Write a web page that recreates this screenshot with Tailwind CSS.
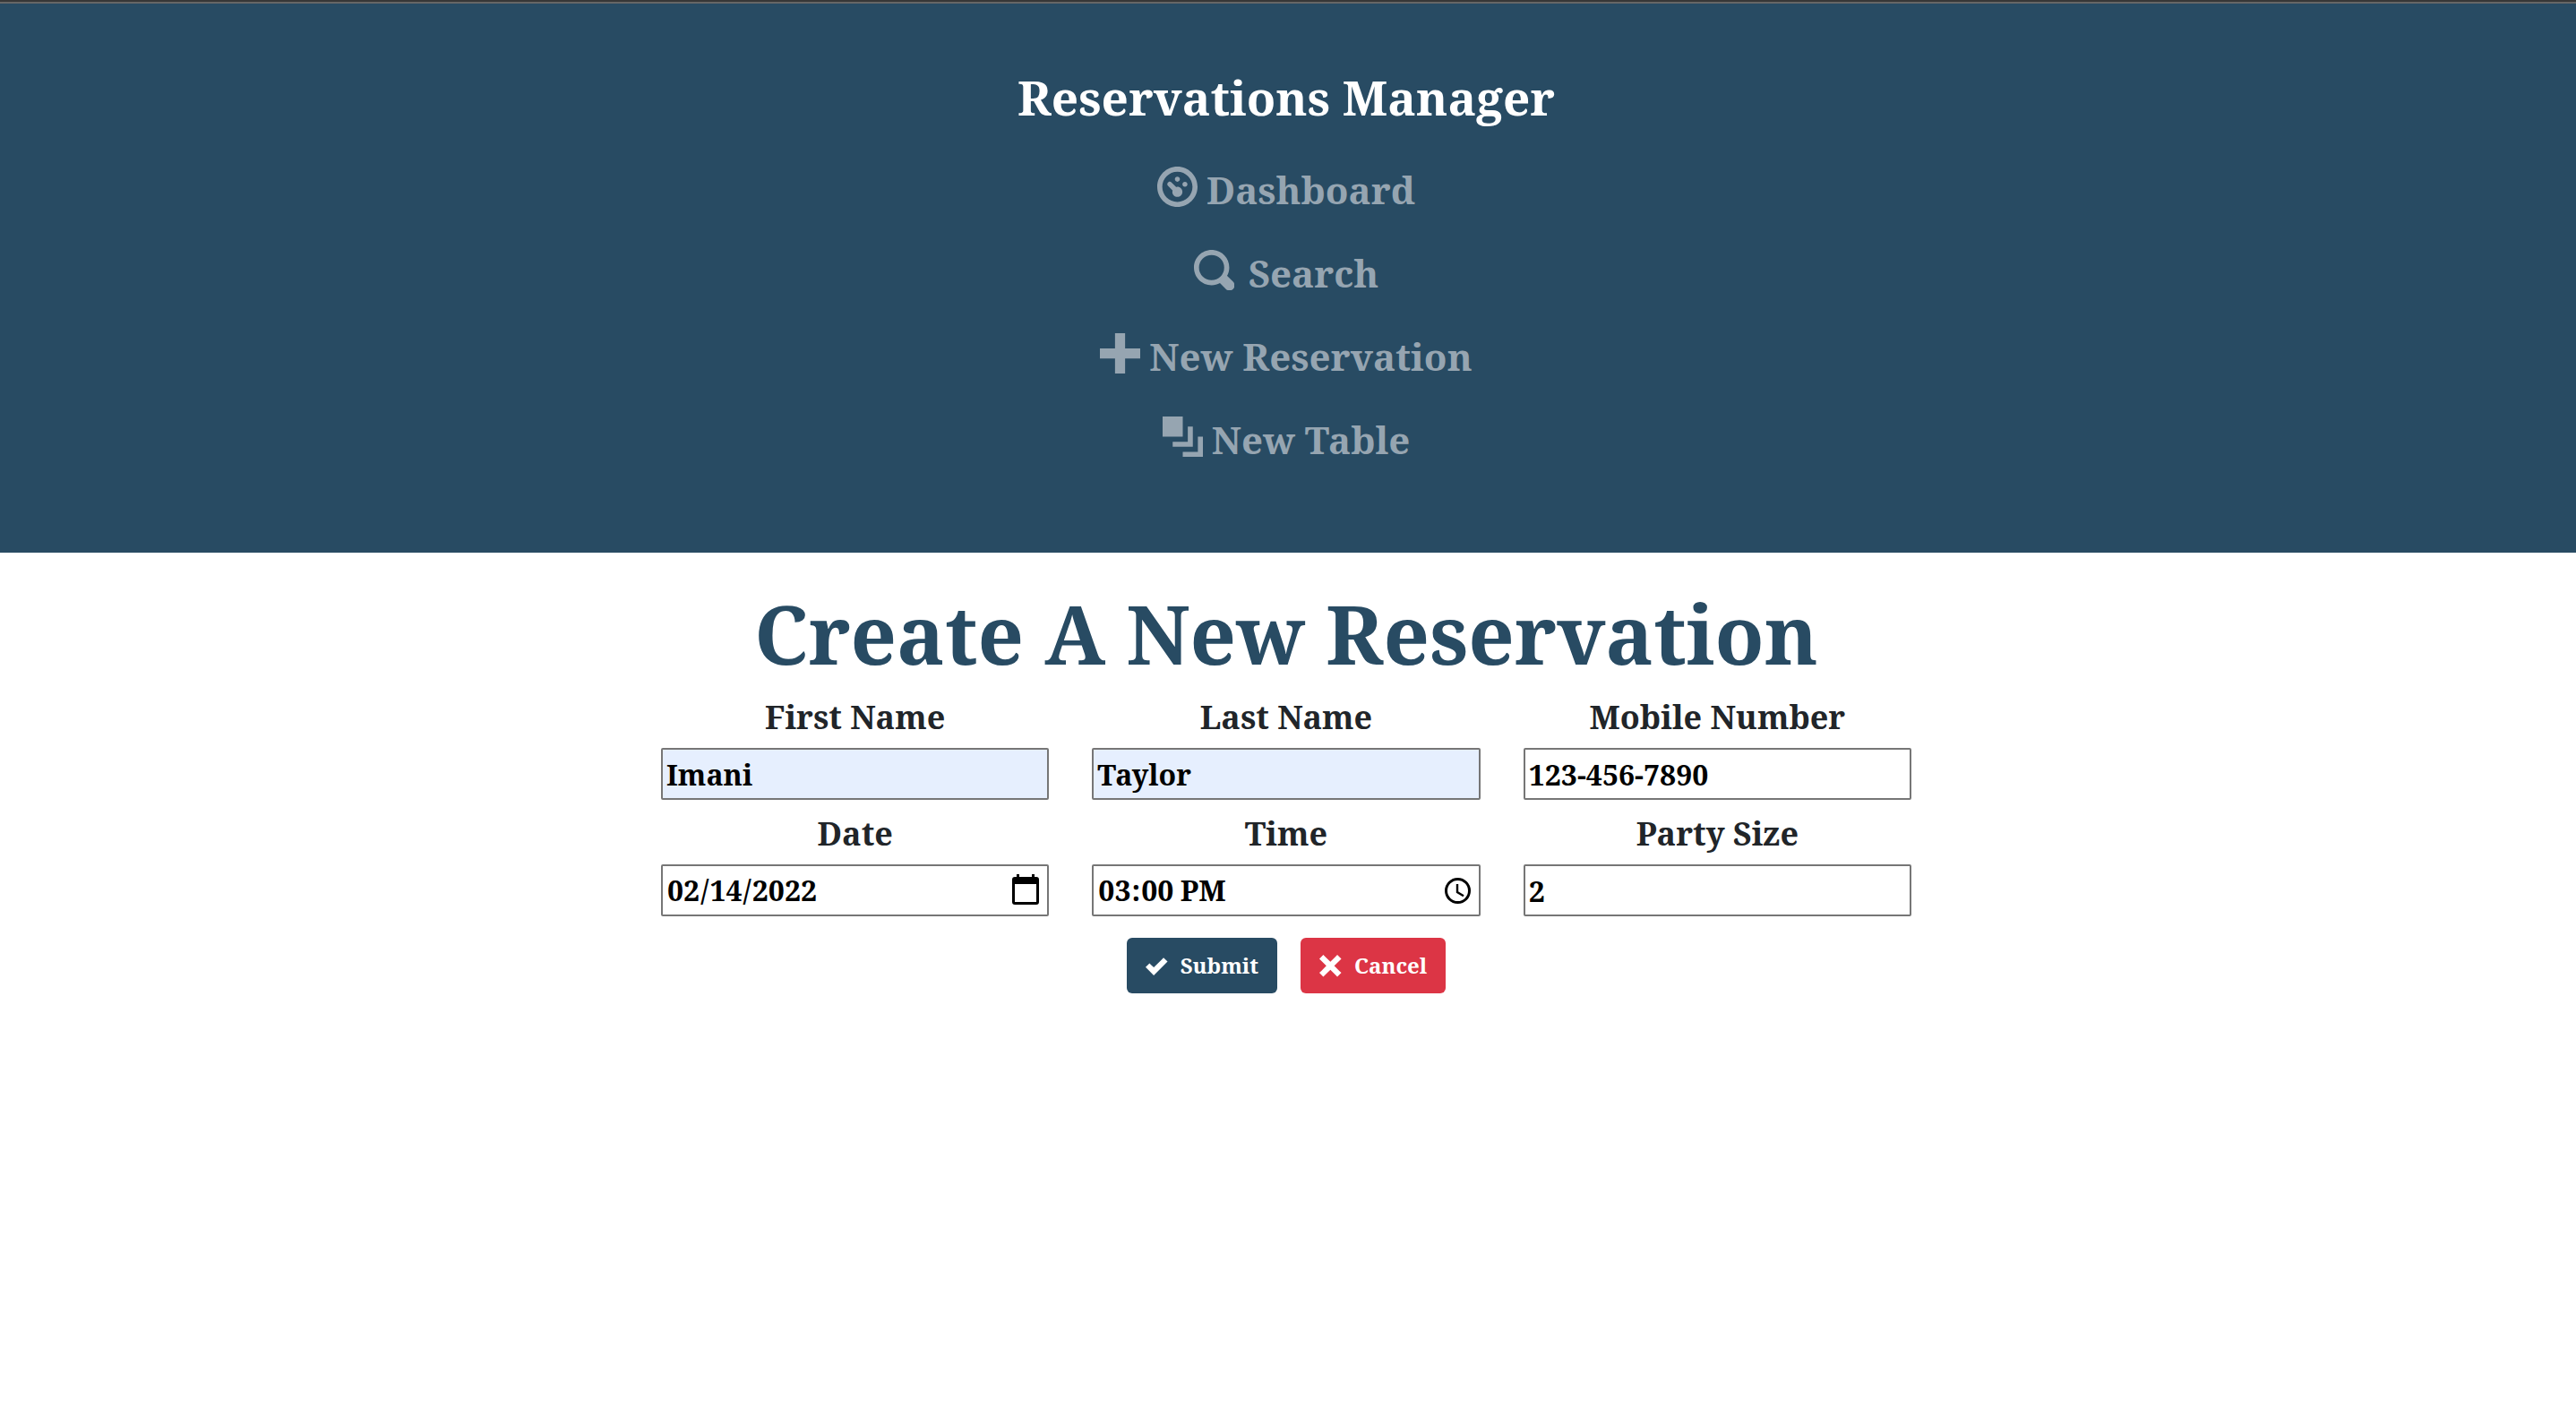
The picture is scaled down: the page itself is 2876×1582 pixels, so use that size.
<!DOCTYPE html>
<html lang="en">
<head>
<meta charset="utf-8">
<meta name="viewport" content="width=device-width, initial-scale=1">
<title>Reservations Manager</title>
<script src="https://cdn.jsdelivr.net/npm/@tailwindcss/browser@4"></script>
</head>
<body class="min-h-screen bg-white font-['Roboto_Slab','Noto_Serif',serif] font-bold text-[#212529]">
<header class="border-t-2 border-[#373737] bg-[#284b63]">
  <div class="flex flex-col items-center border-t-2 border-[#666666] pt-[65px] pr-1 pb-20">
    <a href="#" class="mb-4 text-[53px] leading-[80px] text-white">Reservations Manager</a>
    <nav aria-label="Main">
      <ul class="flex flex-col items-center text-[42px] leading-[60px] text-[#96a5b1]">
        <li class="flex h-[93px] items-center"><a href="#" class="flex items-center gap-[10px]">
          <svg class="mb-[6px] size-[45px]" viewBox="0 0 8 8" fill="currentColor" aria-hidden="true"><path d="M4 0c-2.2 0-4 1.8-4 4s1.8 4 4 4 4-1.8 4-4-1.8-4-4-4zm0 1c1.66 0 3 1.34 3 3s-1.34 3-3 3-3-1.34-3-3 1.34-3 3-3zm0 1c-.28 0-.5.22-.5.5s.22.5.5.5.5-.22.5-.5-.22-.5-.5-.5zm-1.66 1a.5.5 0 0 0-.19.84l.91.91c-.02.08-.06.16-.06.25 0 .55.45 1 1 1s1-.45 1-1-.45-1-1-1c-.09 0-.17.04-.25.06l-.91-.91a.5.5 0 0 0-.44-.16.5.5 0 0 0-.06 0zm3.16 0c-.28 0-.5.22-.5.5s.22.5.5.5.5-.22.5-.5-.22-.5-.5-.5z"/></svg>
          Dashboard</a></li>
        <li class="flex h-[93px] items-center"><a href="#" class="flex items-center gap-4">
          <svg class="mb-[6px] size-[45px]" viewBox="0 0 8 8" fill="currentColor" aria-hidden="true"><path fill-rule="evenodd" d="M3.5 0c-1.93 0-3.5 1.57-3.5 3.5s1.57 3.5 3.5 3.5c.59 0 1.17-.14 1.66-.41a1 1 0 0 0 .13.13l1 1a1.02 1.02 0 1 0 1.44-1.44l-1-1a1 1 0 0 0-.16-.13c.27-.49.44-1.06.44-1.66 0-1.93-1.55-3.5-3.5-3.5zM3.5 1a2.5 2.5 0 1 1 0 5 2.5 2.5 0 0 1 0-5z"/></svg>
          Search</a></li>
        <li class="flex h-[93px] items-center"><a href="#" class="flex items-center gap-[10px]">
          <svg class="mb-[6px] size-[45px]" viewBox="0 0 8 8" fill="currentColor" aria-hidden="true"><path d="M3 0v3h-3v2h3v3h2v-3h3v-2h-3v-3h-2z"/></svg>
          New Reservation</a></li>
        <li class="flex h-[93px] items-center"><a href="#" class="flex items-center gap-[10px]">
          <svg class="mb-[6px] size-[45px]" viewBox="0 0 8 8" fill="currentColor" aria-hidden="true"><path d="M0 0v4h4v-4h-4zm5 2v3h-3v1h4v-4h-1zm2 2v3h-3v1h4v-4h-1z"/></svg>
          New Table</a></li>
      </ul>
    </nav>
  </div>
</header>
<main class="flex flex-col items-center pt-[34px] pr-1">
  <h1 class="text-center text-[90px] leading-[112px] text-[#284b63]">Create A New Reservation</h1>
  <form class="w-full max-w-[1396px]" onsubmit="return false">
    <div class="grid grid-cols-3 gap-x-12">
      <div class="flex flex-col pt-3">
        <label for="first" class="mb-2 text-center text-[36px] leading-[52px]">First Name</label>
        <input id="first" type="text" value="Imani" class="h-[58px] w-full rounded-xs border-2 border-[#767676] bg-[#e6effe] px-1 text-[32px] text-black">
      </div>
      <div class="flex flex-col pt-3">
        <label for="last" class="mb-2 text-center text-[36px] leading-[52px]">Last Name</label>
        <input id="last" type="text" value="Taylor" class="h-[58px] w-full rounded-xs border-2 border-[#767676] bg-[#e6effe] px-1 text-[32px] text-black">
      </div>
      <div class="flex flex-col pt-3">
        <label for="mobile" class="mb-2 text-center text-[36px] leading-[52px]">Mobile Number</label>
        <input id="mobile" type="tel" value="123-456-7890" class="h-[58px] w-full rounded-xs border-2 border-[#767676] bg-white px-1 text-[32px] text-black">
      </div>
      <div class="flex flex-col pt-3">
        <label for="date" class="mb-2 text-center text-[36px] leading-[52px]">Date</label>
        <div class="relative">
          <input id="date" type="date" value="2022-02-14" class="h-[58px] w-full rounded-xs border-2 border-[#767676] bg-white px-1 text-[32px] text-black [&::-webkit-calendar-picker-indicator]:opacity-0">
          <svg class="pointer-events-none absolute top-[11px] right-[11px] h-[34px] w-[30px]" viewBox="0 0 30 34" aria-hidden="true"><path fill="#000" fill-rule="evenodd" d="M5 0h3v3h14V0h3v3h2a3 3 0 0 1 3 3v25a3 3 0 0 1-3 3H3a3 3 0 0 1-3-3V6a3 3 0 0 1 3-3h2zM3 11v20h24V11z"/></svg>
        </div>
      </div>
      <div class="flex flex-col pt-3">
        <label for="time" class="mb-2 text-center text-[36px] leading-[52px]">Time</label>
        <div class="relative">
          <input id="time" type="time" value="15:00" class="h-[58px] w-full rounded-xs border-2 border-[#767676] bg-white px-1 text-[32px] text-black [&::-webkit-calendar-picker-indicator]:opacity-0">
          <svg class="pointer-events-none absolute top-[15px] right-[11px] size-[29px]" viewBox="0 0 29 29" fill="none" stroke="#000" aria-hidden="true"><circle cx="14.5" cy="14.5" r="13" stroke-width="3"/><path stroke-width="2.4" d="M14 7v9l7 4.2"/></svg>
        </div>
      </div>
      <div class="flex flex-col pt-3">
        <label for="party" class="mb-2 text-center text-[36px] leading-[52px]">Party Size</label>
        <input id="party" type="number" value="2" class="h-[58px] w-full rounded-xs border-2 border-[#767676] bg-white px-1 text-[32px] text-black">
      </div>
    </div>
    <div class="mt-6 flex justify-center gap-[26px] text-[24px] leading-[36px] text-white">
      <button type="submit" class="flex h-[62px] items-center gap-[14px] rounded-md bg-[#284b63] px-[21px]">
        <svg class="size-[25px]" viewBox="0 0 8 8" fill="currentColor" aria-hidden="true"><path d="M6.41 1l-.69.72-2.78 2.78-.81-.78-.72-.72-1.41 1.41.72.72 1.5 1.5.69.72.72-.72 3.5-3.5.72-.72-1.44-1.41z"/></svg>
        Submit</button>
      <button type="button" class="flex h-[62px] items-center gap-[14px] rounded-md bg-[#dc3545] px-[21px]">
        <svg class="size-[25px]" viewBox="0 0 8 8" fill="currentColor" aria-hidden="true"><path d="M1.41 0l-1.41 1.41.72.72 1.78 1.81-1.78 1.78-.72.69 1.41 1.44.72-.72 1.81-1.81 1.78 1.81.69.72 1.44-1.44-.72-.69-1.81-1.78 1.81-1.81.72-.72-1.44-1.41-.69.72-1.78 1.78-1.81-1.78-.72-.72z"/></svg>
        Cancel</button>
    </div>
  </form>
</main>
</body>
</html>
